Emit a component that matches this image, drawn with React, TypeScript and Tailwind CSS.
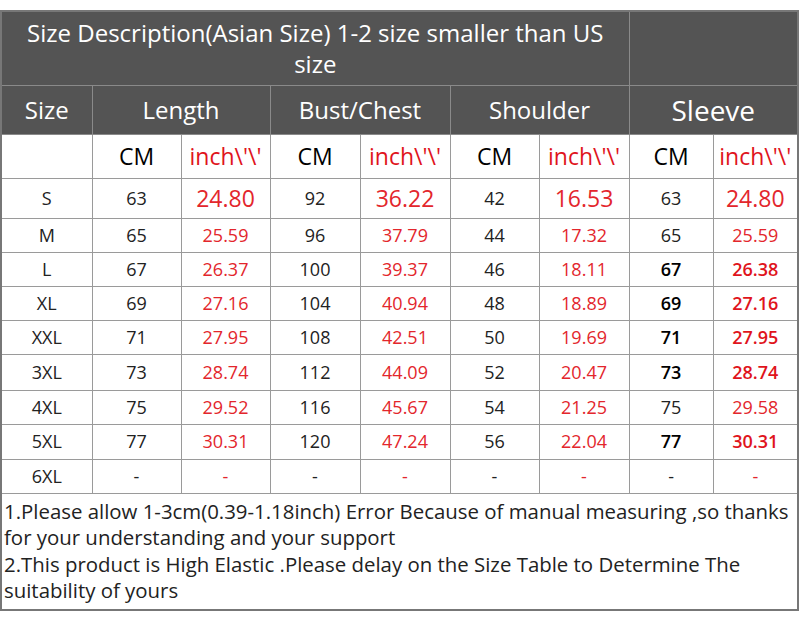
import React from "react";

type Row = {
  size: string;
  h: string;
  vals: [string, string, string, string, string, string, string, string];
  big?: boolean;
  boldSleeve?: boolean;
};

const rows: Row[] = [
  { size: "S", h: "h-[40px]", vals: ["63", "24.80", "92", "36.22", "42", "16.53", "63", "24.80"], big: true },
  { size: "M", h: "h-[34px]", vals: ["65", "25.59", "96", "37.79", "44", "17.32", "65", "25.59"] },
  { size: "L", h: "h-[34px]", vals: ["67", "26.37", "100", "39.37", "46", "18.11", "67", "26.38"], boldSleeve: true },
  { size: "XL", h: "h-[34px]", vals: ["69", "27.16", "104", "40.94", "48", "18.89", "69", "27.16"], boldSleeve: true },
  { size: "XXL", h: "h-[34px]", vals: ["71", "27.95", "108", "42.51", "50", "19.69", "71", "27.95"], boldSleeve: true },
  { size: "3XL", h: "h-[36px]", vals: ["73", "28.74", "112", "44.09", "52", "20.47", "73", "28.74"], boldSleeve: true },
  { size: "4XL", h: "h-[34px]", vals: ["75", "29.52", "116", "45.67", "54", "21.25", "75", "29.58"] },
  { size: "5XL", h: "h-[35px]", vals: ["77", "30.31", "120", "47.24", "56", "22.04", "77", "30.31"], boldSleeve: true },
  { size: "6XL", h: "h-[34px]", vals: ["-", "-", "-", "-", "-", "-", "-", "-"] },
];

const widths = ["w-[91px]", "w-[89px]", "w-[89px]", "w-[90px]", "w-[90px]", "w-[89px]", "w-[90px]", "w-[84px]", "w-[85px]"];

export default function App() {
  const cell = "border border-[#9a9a9a] text-center align-middle p-0";
  const head = "border border-[#8a8a8a] text-center align-middle p-0 bg-[#545454] text-white";
  return (
    <div
      className="w-[800px] h-[621px] bg-white pt-[10px]"
      style={{ fontFamily: '"Open Sans", "Noto Sans", sans-serif' }}
    >
      <table className="table-fixed border-collapse w-[797px] border-2 border-[#777]">
        <colgroup>
          {widths.map((w, i) => (
            <col key={i} className={w} />
          ))}
        </colgroup>
        <tbody>
          <tr className="h-[74px]">
            <td colSpan={7} className={`${head} text-[24px] leading-[31px] px-[18px]`}>
              Size Description(Asian Size) 1-2 size smaller than US size
            </td>
            <td colSpan={2} className={head}></td>
          </tr>
          <tr className="h-[49px]">
            <td className={`${head} text-[24px]`}>Size</td>
            <td colSpan={2} className={`${head} text-[24px]`}>Length</td>
            <td colSpan={2} className={`${head} text-[24px]`}>Bust/Chest</td>
            <td colSpan={2} className={`${head} text-[24px]`}>Shoulder</td>
            <td colSpan={2} className={`${head} text-[28px]`}>Sleeve</td>
          </tr>
          <tr className="h-[44px]">
            <td className={cell}></td>
            {[0, 1, 2, 3].map((i) => (
              <React.Fragment key={i}>
                <td className={`${cell} text-[23px] text-black`}>CM</td>
                <td className={`${cell} text-[23px] text-[#e0141c]`}>inch\'\'</td>
              </React.Fragment>
            ))}
          </tr>
          {rows.map((r) => (
            <tr key={r.size} className={r.h}>
              <td className={`${cell} text-[18px] text-[#222]`}>{r.size}</td>
              {r.vals.map((v, i) => {
                const isInch = i % 2 === 1;
                const isSleeve = i >= 6;
                const bold = isSleeve && r.boldSleeve ? "font-semibold" : "";
                const size = isInch && r.big ? "text-[23px]" : "text-[18px]";
                const color = isInch
                  ? isSleeve && r.boldSleeve
                    ? "text-[#e0141c]"
                    : "text-[#e3262c]"
                  : isSleeve && r.boldSleeve
                  ? "text-black"
                  : "text-[#222]";
                return (
                  <td key={i} className={`${cell} ${size} ${color} ${bold}`}>
                    {v}
                  </td>
                );
              })}
            </tr>
          ))}
          <tr className="h-[117px]">
            <td
              colSpan={9}
              className="border border-[#777] text-left align-top px-[2px] pt-[4px] text-[20.4px] leading-[26.5px] text-[#222]"
            >
              1.Please allow 1-3cm(0.39-1.18inch) Error Because of manual measuring ,so thanks for your understanding and your support
              <br />
              2.This product is High Elastic .Please delay on the Size Table to Determine The suitability of yours
            </td>
          </tr>
        </tbody>
      </table>
    </div>
  );
}
